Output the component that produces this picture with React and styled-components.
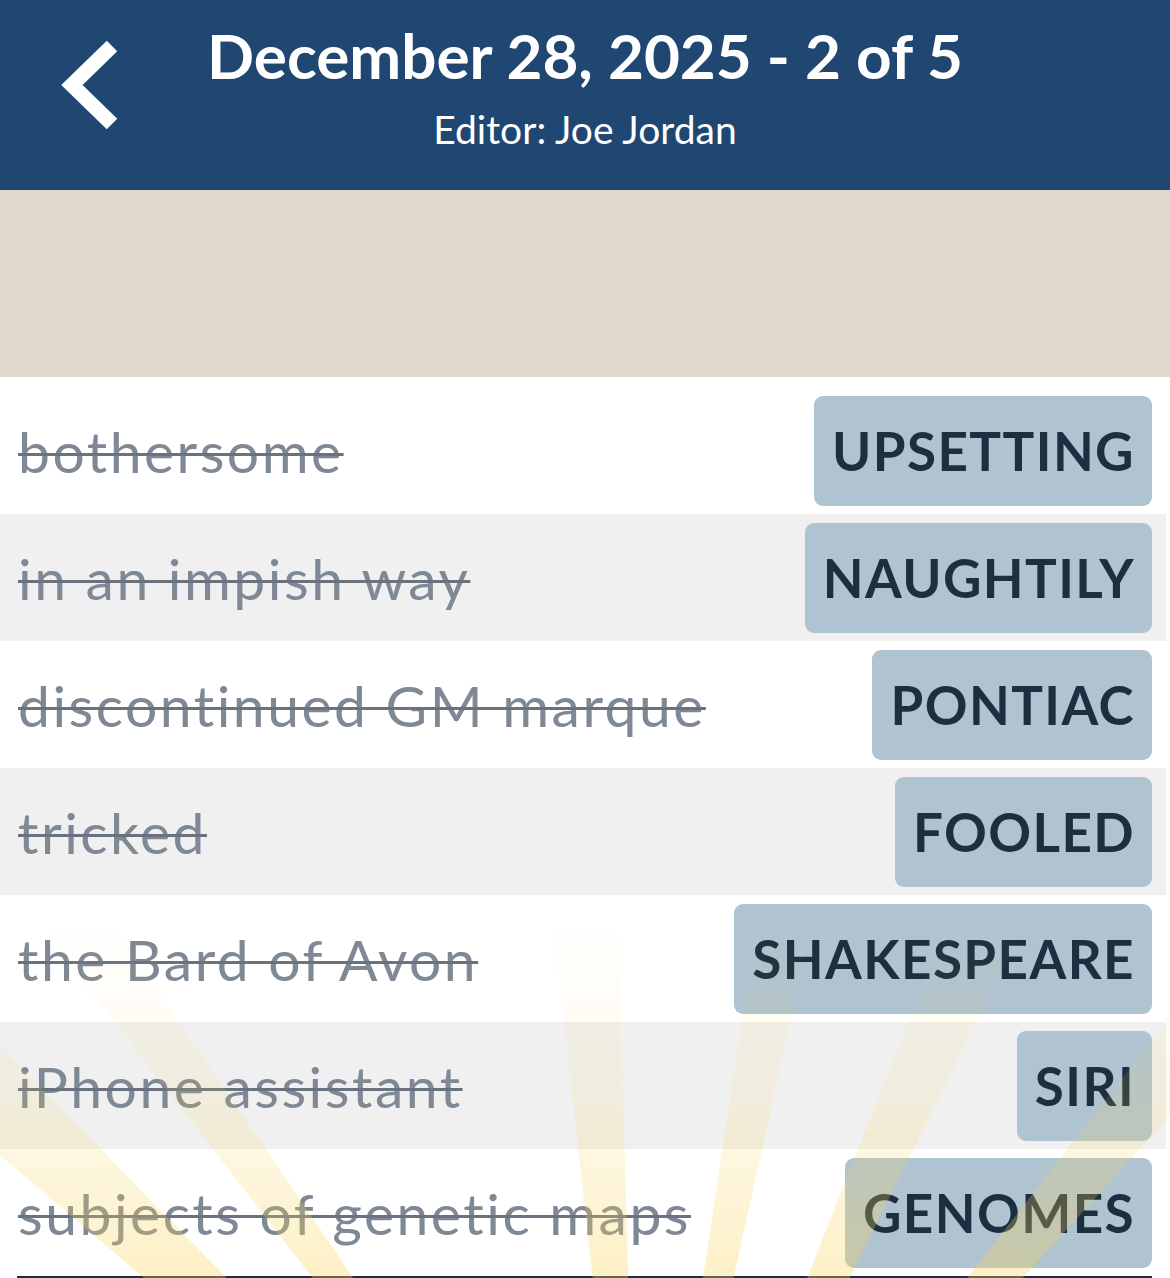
import React from 'react'
import styled, { createGlobalStyle } from 'styled-components'

// --- Data ---
const clues = [
  { clue: 'bothersome', answer: 'UPSETTING' },
  { clue: 'in an impish way', answer: 'NAUGHTILY' },
  { clue: 'discontinued GM marque', answer: 'PONTIAC' },
  { clue: 'tricked', answer: 'FOOLED' },
  { clue: 'the Bard of Avon', answer: 'SHAKESPEARE' },
  { clue: 'iPhone assistant', answer: 'SIRI' },
  { clue: 'subjects of genetic maps', answer: 'GENOMES' },
]

// rays of the sunburst: angle from vertical and half-width, in degrees
const rays = [
  [-47, 2.6], [-36, 1.8], [-4, 2.4], [10.5, 2], [24, 2.4], [40, 2.2],
]

// --- Sunburst drawing ---
const Sunburst = () => {
  const cx = 640
  const cy = 1700
  const r = 1700
  return (
    <RaysLayer width="1170" height="1278" viewBox="0 0 1170 1278">
      <defs>
        <linearGradient id="rayFade" x1="0" y1="0" x2="0" y2="1278" gradientUnits="userSpaceOnUse">
          <stop offset="0.72" stopColor="#f7d35a" stopOpacity="0" />
          <stop offset="0.86" stopColor="#f7d35a" stopOpacity="0.13" />
          <stop offset="1" stopColor="#f9d45a" stopOpacity="0.34" />
        </linearGradient>
      </defs>
      {rays.map(([a, w], i) => {
        const a1 = ((a - w) * Math.PI) / 180
        const a2 = ((a + w) * Math.PI) / 180
        const p1 = `${cx + r * Math.sin(a1)},${cy - r * Math.cos(a1)}`
        const p2 = `${cx + r * Math.sin(a2)},${cy - r * Math.cos(a2)}`
        return <polygon key={i} points={`${cx},${cy} ${p1} ${p2}`} fill="url(#rayFade)" />
      })}
    </RaysLayer>
  )
}

// --- App ---
const App = () => {
  return (
    <>
      <GlobalStyle />
      <Screen>
        <Header>
          <BackButton aria-label="Back">
            <svg width="60" height="90" viewBox="0 0 60 90">
              <polyline points="52,6 12,45 52,84" fill="none" stroke="#fff" strokeWidth="15" strokeLinejoin="miter" />
            </svg>
          </BackButton>
          <TitleBlock>
            <Title>December 28, 2025 - 2 of 5</Title>
            <Subtitle>Editor: Joe Jordan</Subtitle>
          </TitleBlock>
          <span />
        </Header>
        <Banner />
        <List>
          {clues.map((c, i) => (
            <Row key={c.answer} $shaded={i % 2 === 1}>
              <Clue>{c.clue}</Clue>
              <Answer>{c.answer}</Answer>
            </Row>
          ))}
          <Divider />
        </List>
        <Sunburst />
      </Screen>
    </>
  )
}

export default App

// --- Styles ---
const GlobalStyle = createGlobalStyle`
  * { box-sizing: border-box; }
  body {
    margin: 0;
    background: #fff;
    font-family: Lato, "Open Sans", sans-serif;
  }
`

const Screen = styled.div`
  position: relative;
  width: 1170px;
  height: 1278px;
  overflow: hidden;
  background: #fff;
`

const Header = styled.header`
  display: grid;
  grid-template-columns: 1fr auto 1fr;
  align-items: start;
  height: 190px;
  background: #1f4771;
  color: #fff;
`

const BackButton = styled.button`
  justify-self: start;
  margin: 40px 0 0 60px;
  padding: 0;
  border: 0;
  background: none;
  display: flex;
  cursor: pointer;
`

const TitleBlock = styled.div`
  display: flex;
  flex-direction: column;
  align-items: center;
  padding-top: 20px;
`

const Title = styled.h1`
  margin: 0;
  font-size: 62px;
  font-weight: 700;
  line-height: 70px;
`

const Subtitle = styled.div`
  margin-top: 17px;
  font-size: 39px;
  line-height: 44px;
`

const Banner = styled.div`
  height: 187px;
  background: #dfd8cc;
`

const List = styled.div`
  width: 1166px;
  padding-top: 10px;
`

const Row = styled.div`
  display: flex;
  align-items: center;
  justify-content: space-between;
  height: 127px;
  padding: 0 14px 0 18px;
  background: ${p => (p.$shaded ? '#f0f0f0' : '#fff')};
`

const Clue = styled.span`
  font-size: 57px;
  letter-spacing: 2.5px;
  color: #7f8995;
  text-decoration: line-through;
  text-decoration-thickness: 3px;
  text-decoration-color: #68737f;
  white-space: nowrap;
`

const Answer = styled.span`
  display: flex;
  align-items: center;
  height: 110px;
  padding: 0 17px 0 18px;
  border-radius: 9px;
  background: #b0c3d0;
  color: #1c2e40;
  font-size: 53px;
  font-weight: 700;
  letter-spacing: 1.4px;
`

const Divider = styled.div`
  margin: 0 14px 0 17px;
  border-top: 3px solid #1c2e40;
`

const RaysLayer = styled.svg`
  position: absolute;
  left: 0;
  top: 0;
  pointer-events: none;
`
